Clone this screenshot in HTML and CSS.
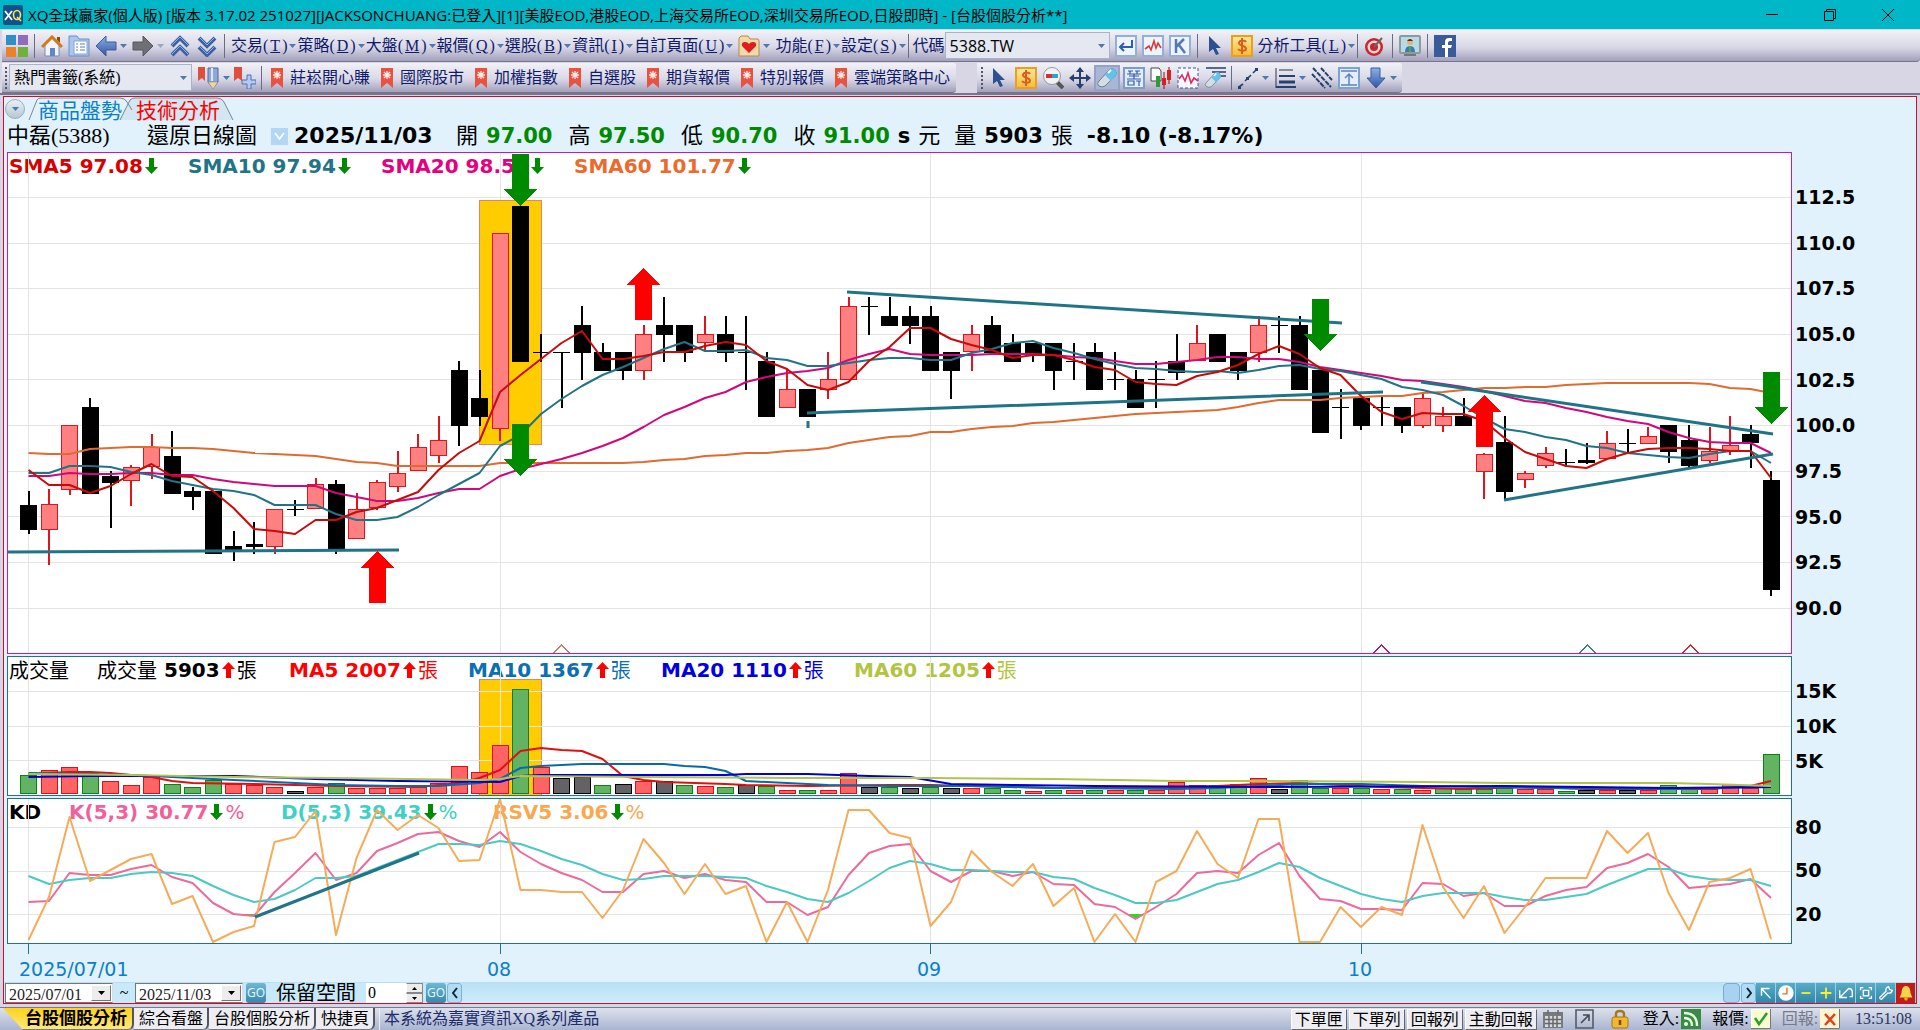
FILE: index.html
```html
<!DOCTYPE html>
<html lang="zh-Hant">
<head>
<meta charset="utf-8">
<title>XQ全球贏家(個人版)</title>
<link rel="stylesheet" href="styles.css">
</head>
<body>
<svg class="defs" aria-hidden="true">
  <defs>
    <linearGradient id="blue" x1="0" y1="0" x2="0" y2="1"><stop offset="0" stop-color="#8fb0e4"/><stop offset="1" stop-color="#2f55a4"/></linearGradient>
    <linearGradient id="gold" x1="0" y1="0" x2="0" y2="1"><stop offset="0" stop-color="#ffe9a0"/><stop offset="1" stop-color="#f7b832"/></linearGradient>
  </defs>
  <symbol id="i-caret" viewBox="0 0 7 4"><path d="M0 0h7L3.500 4z" fill="#4f78ae"/></symbol>
  <symbol id="i-caret-black" viewBox="0 0 7 4"><path d="M0 0h7L3.500 4z" fill="#000"/></symbol>
  <symbol id="i-up" viewBox="0 0 13 16"><path d="M6.500 0L13 7H9v9H4V7H0z" fill="#f00"/></symbol>
  <symbol id="i-down" viewBox="0 0 13 16"><path d="M6.500 16L13 9H9V0H4v9H0z" fill="#008a00"/></symbol>
  <symbol id="i-mark" viewBox="0 0 12 20"><path d="M0 0h12v20l-6-5-6 5z" fill="#e8523f"/><path d="M6 3v8M2 7h8M3 4l6 6M9 4l-6 6" stroke="#ffe9e4" stroke-width="1.300"/></symbol>
  <symbol id="i-cursor" viewBox="0 0 22 22"><path d="M5 1v16l4-3 3 6 3-1-3-6h5z" fill="#2d508f"/></symbol>
  <symbol id="i-dollar" viewBox="0 0 22 22"><rect x="1" y="1" width="20" height="20" fill="url(#gold)" stroke="#e8a020" stroke-width="2"/><path d="M15 7c-1-2-7-2-7 1s7 2.500 7 5.500-6 3-8 .5M11 3v16" fill="none" stroke="#d8601c" stroke-width="2"/></symbol>
  <symbol id="i-eraser" viewBox="0 0 22 22"><path d="M3 14L13 3q3-3 6 0t0 6L9 19q-3 2-6 0t0-5z" fill="#d5dde3" stroke="#6b7f92"/><path d="M9 8l4-5q3-3 6 0t0 6l-4 5z" fill="#63c2ea"/><path d="M12 6l3-3" stroke="#e8fbff" stroke-width="2"/></symbol>
</svg>

<header class="titlebar">
  <svg class="app-logo" viewBox="0 0 20 20"><rect width="20" height="20" rx="2" fill="#12508a"/><path d="M2 6l7 9M9 6l-7 9" stroke="#fff" stroke-width="1.800"/><ellipse cx="14" cy="10" rx="3.500" ry="4.500" fill="none" stroke="#ffe35a" stroke-width="1.600"/><path d="M14 12l4 4" stroke="#ffe35a" stroke-width="1.600"/></svg>
  <h1 class="title">XQ全球贏家(個人版) [版本 3.17.02 251027][JACKSONCHUANG:已登入][1][美股EOD,港股EOD,上海交易所EOD,深圳交易所EOD,日股即時] - [台股個股分析**]</h1>
  <div class="window-buttons">
    <button aria-label="最小化"><svg viewBox="0 0 12 12"><path d="M0 5.500h12" stroke="#000"/></svg></button>
    <button aria-label="還原"><svg viewBox="0 0 12 12"><path d="M.5 2.500h9v9h-9zM2.500 2.500v-2h9v9h-2" fill="none" stroke="#000"/></svg></button>
    <button aria-label="關閉"><svg viewBox="0 0 12 12"><path d="M0 0l12 12M12 0L0 12" stroke="#000"/></svg></button>
  </div>
</header>

<nav class="toolbar main-bar">
  <button class="tool" aria-label="選單"><svg viewBox="0 0 22 22"><path d="M0 0h10v10H0z" fill="#2f8fc8"/><path d="M12 0h10v10H12z" fill="#8f6cc0"/><path d="M0 12h10v10H0z" fill="#f08028"/><path d="M12 12h10v10H12z" fill="#70b238"/></svg></button>
  <i class="sep"></i>
  <button class="tool" aria-label="首頁"><svg viewBox="0 0 22 22"><path d="M4 10v11h14V10l-7-7z" fill="#f2f5fb" stroke="#7089b8"/><path d="M9 13h5v8H9z" fill="#5f86c6"/><path d="M16 2h3v6l-3-3z" fill="#8a4a20"/><path d="M1 12L11 2l10 10" fill="none" stroke="#d07a18" stroke-width="3"/></svg></button>
  <button class="tool" aria-label="頁面清單"><svg viewBox="0 0 22 22"><path d="M1 20V1h8l2 3h10v17H1z" fill="#a9c6ee" stroke="#6d8fc4"/><path d="M6 6h13v13H6z" fill="#fff" stroke="#87a4d0"/><path d="M8 9h2M8 12h2M8 15h2M12 9h5M12 12h5M12 15h5" stroke="#4f7fc2"/></svg></button>
  <button class="tool with-caret" aria-label="上一頁"><svg viewBox="0 0 22 22"><path d="M1 11L11 1v6h10v8H11v6z" fill="url(#blue)" stroke="#3a5c9c"/></svg><svg class="caret"><use href="#i-caret"/></svg></button>
  <button class="tool with-caret" aria-label="下一頁"><svg viewBox="0 0 22 22"><path d="M21 11L11 1v6H1v8h10v6z" fill="#6e7076" stroke="#55575c"/></svg><svg class="caret faded"><use href="#i-caret"/></svg></button>
  <button class="tool" aria-label="向上"><svg viewBox="0 0 22 22"><path d="M3 11l8-8 8 8M3 20l8-8 8 8" fill="none" stroke="#3c61a4" stroke-width="4"/><path d="M3 10l8-8 8 8M3 19l8-8 8 8" fill="none" stroke="#8fb0e4"/></svg></button>
  <button class="tool" aria-label="向下"><svg viewBox="0 0 22 22"><path d="M3 3l8 8 8-8M3 12l8 8 8-8" fill="none" stroke="#3c61a4" stroke-width="4"/><path d="M3 2l8 8 8-8M3 11l8 8 8-8" fill="none" stroke="#8fb0e4"/></svg></button>
  <i class="sep"></i>
  <button class="menu">交易(<u>T</u>)<svg class="caret"><use href="#i-caret"/></svg></button>
  <button class="menu">策略(<u>D</u>)<svg class="caret"><use href="#i-caret"/></svg></button>
  <button class="menu">大盤(<u>M</u>)<svg class="caret"><use href="#i-caret"/></svg></button>
  <button class="menu">報價(<u>Q</u>)<svg class="caret"><use href="#i-caret"/></svg></button>
  <button class="menu">選股(<u>B</u>)<svg class="caret"><use href="#i-caret"/></svg></button>
  <button class="menu">資訊(<u>I</u>)<svg class="caret"><use href="#i-caret"/></svg></button>
  <button class="menu">自訂頁面(<u>U</u>)<svg class="caret"><use href="#i-caret"/></svg></button>
  <button class="tool with-caret favorites" aria-label="我的最愛"><svg viewBox="0 0 22 22"><path d="M1 20V3l2-2h7l2 3h8l1 2v15H1z" fill="#f1d9a8" stroke="#b48a4c"/><path d="M11 18L4 11q-1-4 3-4 3 0 4 2 1-2 4-2 4 0 3 4z" fill="#e01c20"/></svg><svg class="caret"><use href="#i-caret"/></svg></button>
  <button class="menu">功能(<u>F</u>)<svg class="caret"><use href="#i-caret"/></svg></button>
  <button class="menu">設定(<u>S</u>)<svg class="caret"><use href="#i-caret"/></svg></button>
  <i class="sep"></i>
  <label class="code-label" for="code">代碼</label>
  <span class="combo code-combo"><input id="code" value="5388.TW"><svg class="caret"><use href="#i-caret"/></svg></span>
  <button class="tool" aria-label="輸入"><svg viewBox="0 0 22 22"><rect x="1" y="1" width="20" height="20" fill="#eef4fd" stroke="#93aed8" stroke-width="2"/><path d="M17 5v7H6M9 8l-4 4 4 4" fill="none" stroke="#2f5db0" stroke-width="2"/></svg></button>
  <button class="tool" aria-label="走勢圖"><svg viewBox="0 0 22 22"><rect x="1" y="1" width="20" height="20" fill="#eef4fd" stroke="#93aed8" stroke-width="2"/><path d="M3 14l4-3 2 4 3-9 2 7 2-5 3 5" fill="none" stroke="#d83a3a" stroke-width="1.600"/></svg></button>
  <button class="tool" aria-label="K線圖"><svg viewBox="0 0 22 22"><rect x="1" y="1" width="20" height="20" fill="#eef4fd" stroke="#93aed8" stroke-width="2"/><path d="M7 4v14M15 4l-8 8M10 10l6 8" fill="none" stroke="#5478b8" stroke-width="2.500"/></svg></button>
  <i class="sep"></i>
  <button class="tool" aria-label="游標"><svg><use href="#i-cursor"/></svg></button>
  <button class="tool" aria-label="下單"><svg><use href="#i-dollar"/></svg></button>
  <button class="menu">分析工具(<u>L</u>)<svg class="caret"><use href="#i-caret"/></svg></button>
  <i class="sep"></i>
  <button class="tool" aria-label="目標"><svg viewBox="0 0 22 22"><circle cx="10" cy="12" r="9" fill="#c9252b"/><circle cx="10" cy="12" r="6.500" fill="#f3dada"/><circle cx="10" cy="12" r="4" fill="#c9252b"/><path d="M10 12l8-9" stroke="#666" stroke-width="2"/></svg></button>
  <i class="sep"></i>
  <button class="tool" aria-label="客服"><svg viewBox="0 0 22 22"><rect x="1" y="1" width="20" height="17" rx="1" fill="#b6dbe2" stroke="#8d9aa0" stroke-width="2"/><circle cx="11" cy="7" r="3" fill="#e8b078"/><path d="M8 6q3-4 6 0z" fill="#4a3020"/><path d="M6 17q0-6 5-6t5 6z" fill="#3d79b6"/><path d="M10 11h2v6h-2z" fill="#4fa848"/><path d="M5 20h12" stroke="#777" stroke-width="2"/></svg></button>
  <i class="sep"></i>
  <button class="tool" aria-label="Facebook"><svg viewBox="0 0 22 22"><rect width="22" height="22" fill="#3b5a98"/><path d="M18 6h-2q-2 0-2 2v2h4l-1 3h-3v9h-3v-9H8v-3h3V7q0-4 4-4h3z" fill="#fff"/></svg></button>
</nav>

<div class="toolbar-row">
  <nav class="toolbar bookmarks">
    <i class="grip"></i>
    <span class="combo book-combo"><select aria-label="書籤群組"><option>熱門書籤(系統)</option></select><svg class="caret"><use href="#i-caret"/></svg></span>
    <button class="tool with-caret" aria-label="編輯書籤"><svg viewBox="0 0 22 22"><path d="M0 0h7v14l-3-3-4 3z" fill="#e04f3e"/><path d="M10 1h10v14l-5 6-5-6z" fill="#8fa8d8" stroke="#4f689c"/><path d="M10 15h10l-5 7z" fill="#efd7a0" stroke="#777" stroke-width=".5"/><path d="M14 1v13" stroke="#dce6fa" stroke-width="2"/></svg><svg class="caret"><use href="#i-caret"/></svg></button>
    <button class="tool" aria-label="加入書籤"><svg viewBox="0 0 22 22"><path d="M0 0h8v14l-4-3-4 3z" fill="#e04f3e"/><path d="M13 8h4v5h5v4h-5v5h-4v-5H8v-4h5z" fill="#b5c9ee" stroke="#4f73b4"/></svg></button>
    <i class="sep"></i>
    <button class="mark"><svg><use href="#i-mark"/></svg>莊崧開心賺</button>
    <button class="mark"><svg><use href="#i-mark"/></svg>國際股市</button>
    <button class="mark"><svg><use href="#i-mark"/></svg>加權指數</button>
    <button class="mark"><svg><use href="#i-mark"/></svg>自選股</button>
    <button class="mark"><svg><use href="#i-mark"/></svg>期貨報價</button>
    <button class="mark"><svg><use href="#i-mark"/></svg>特別報價</button>
    <button class="mark"><svg><use href="#i-mark"/></svg>雲端策略中心</button>
  </nav>
  <nav class="toolbar drawing">
    <i class="grip"></i>
    <button class="tool" aria-label="游標"><svg><use href="#i-cursor"/></svg></button>
    <button class="tool" aria-label="下單"><svg><use href="#i-dollar"/></svg></button>
    <button class="tool" aria-label="縮小"><svg viewBox="0 0 22 22"><path d="M15 15l6 6" stroke="#555" stroke-width="4"/><circle cx="10" cy="9" r="8.500" fill="#f0f3f6" stroke="#999"/><path d="M4 7h6v4H4z" fill="#d83030"/><path d="M10 7h6v4h-6z" fill="#30a0d0"/></svg></button>
    <button class="tool" aria-label="移動"><svg viewBox="0 0 22 22"><path d="M11 3v16M3 11h16" stroke="#27406e" stroke-width="2"/><path d="M11 0l4 5H7zM11 22l4-5H7zM0 11l5-4v8zM22 11l-5-4v8z" fill="#27406e"/></svg></button>
    <button class="tool pressed" aria-label="橡皮擦"><svg><use href="#i-eraser"/></svg></button>
    <button class="tool" aria-label="籌碼"><svg viewBox="0 0 22 22"><rect x="1" y="1" width="20" height="20" fill="#e4edfb" stroke="#7c9bd0" stroke-width="2"/><path d="M5 4h5M12 4h5M4 7h14M6 9h10M4 12h14M5 14h6v4H5zM13 14h5M16 14v5M7 4v3M14 4v3M11 7v5" fill="none" stroke="#2f5db0" stroke-width="1.200"/></svg></button>
    <button class="tool" aria-label="K線設定"><svg viewBox="0 0 22 22"><path d="M1 1h8l2 3v10H1z" fill="#fff" stroke="#445"/><path d="M6 9h4v11H6z" fill="#2f9a3a"/><path d="M14 5v17M19 0v17" stroke="#a00"/><path d="M12 11h4v7h-4zM17 3h4v10h-4z" fill="#d82020"/></svg></button>
    <button class="tool" aria-label="區間"><svg viewBox="0 0 22 22"><rect x="1" y="1" width="20" height="20" fill="#f6f9ff" stroke="#3556a0" stroke-dasharray="3 2"/><path d="M2 12l3-4 3 6 3-8 3 10 3-5 4 3" fill="none" stroke="#e02a60" stroke-width="1.600"/></svg></button>
    <button class="tool" aria-label="清除畫線"><svg viewBox="0 0 22 22"><path d="M2 1h20M8 5h14M12 9h10" stroke="#27406e" stroke-width="1.500"/><use href="#i-eraser" y="4" width="18" height="18"/></svg></button>
    <i class="sep"></i>
    <button class="tool with-caret" aria-label="畫線"><svg viewBox="0 0 22 22"><path d="M2 20l4-3M8 14l6-6M16 6l4-4" stroke="#27406e" stroke-width="1.600"/><path d="M1 19h3v3H1zM9 10h3v3H9zM18 1h3v3h-3z" fill="#27406e"/></svg><svg class="caret"><use href="#i-caret"/></svg></button>
    <button class="tool with-caret" aria-label="線型"><svg viewBox="0 0 22 22"><path d="M2 1v20M5 3h14" stroke="#334"/><path d="M5 9h16M2 20h20" stroke="#27406e" stroke-width="2"/><path d="M5 15h16" stroke="#27406e" stroke-width="3"/></svg><svg class="caret"><use href="#i-caret"/></svg></button>
    <button class="tool" aria-label="平行線"><svg viewBox="0 0 22 22"><path d="M1 7l13 14M2 1l18 19M10 1l11 12" stroke="#27406e" stroke-width="2" stroke-dasharray="5 1"/></svg></button>
    <button class="tool" aria-label="標記"><svg viewBox="0 0 22 22"><rect x="1" y="1" width="20" height="20" fill="#e4eefb" stroke="#7fa0d2" stroke-width="2"/><path d="M3 4h16M3 18h16M11 18V8M7 11l4-4 4 4" fill="none" stroke="#5b83c4" stroke-width="1.500"/></svg></button>
    <button class="tool with-caret" aria-label="箭頭"><svg viewBox="0 0 22 22"><path d="M6 1h9v10h5l-9 10L2 11h4z" fill="url(#blue)" stroke="#3a5c9c"/></svg><svg class="caret"><use href="#i-caret"/></svg></button>
  </nav>
</div>

<main class="frame">
  <div class="tabs" role="tablist">
    <svg class="tab-lines" viewBox="0 0 240 23"><path d="M116 23L126 3q2-2 5-2h82q5 0 7 4l9 18z" fill="#d3e6f2"/><path d="M25 23L33 3q1-2 4-2h79q5 0 7 4l5 8M116 23L126 3q2-2 5-2h82q5 0 7 4l9 18" fill="none" stroke="#78878f"/></svg>
    <button class="tab-menu" aria-label="分頁選單"><svg class="caret"><use href="#i-caret"/></svg></button>
    <button class="tab" role="tab">商品盤勢</button>
    <button class="tab active" role="tab" aria-selected="true">技術分析</button>
  </div>

  <div class="quote">
    <span>中磊(5388)</span><span>還原日線圖</span>
    <button class="drop" aria-label="週期"><svg viewBox="0 0 17 17"><path d="M4 5l4.500 6L13 5" fill="none" stroke="#fff" stroke-width="1.500"/></svg></button>
    <b class="date">2025/11/03</b>
    <span>開</span><b class="fall">97.00</b><span>高</span><b class="fall">97.50</b><span>低</span><b class="fall">90.70</b>
    <span>收</span><b class="fall tight">91.00</b><b class="tight">s</b><span class="unit">元</span><span>量</span><b class="tight">5903</b><span class="unit">張</span><b class="change">-8.10 (-8.17%)</b>
  </div>

  <div class="charts">
    <section class="panel price">
      <div class="legend price-legend">
        <span class="sma5">SMA5 97.08<svg><use href="#i-down"/></svg></span>
        <span class="sma10">SMA10 97.94<svg><use href="#i-down"/></svg></span>
        <span class="sma20">SMA20 98.50<svg><use href="#i-down"/></svg></span>
        <span class="sma60">SMA60 101.77<svg><use href="#i-down"/></svg></span>
      </div>
      <svg id="price" class="plot" viewBox="8 153 1783 500" preserveAspectRatio="none"></svg>
    </section>
    <div class="scale price-scale"><span>112.5</span><span>110.0</span><span>107.5</span><span>105.0</span><span>102.5</span><span>100.0</span><span>97.5</span><span>95.0</span><span>92.5</span><span>90.0</span></div>

    <section class="panel volume">
      <div class="legend volume-legend">
        <span><em>成交量</em></span>
        <span><em class="lead">成交量</em>5903<svg><use href="#i-up"/></svg><em>張</em></span>
        <span class="ma5">MA5 2007<svg><use href="#i-up"/></svg><em>張</em></span>
        <span class="ma10">MA10 1367<svg><use href="#i-up"/></svg><em>張</em></span>
        <span class="ma20">MA20 1110<svg><use href="#i-up"/></svg><em>張</em></span>
        <span class="ma60">MA60 1205<svg><use href="#i-up"/></svg><em>張</em></span>
      </div>
      <svg id="volume" class="plot" viewBox="8 657 1783 138" preserveAspectRatio="none"></svg>
    </section>
    <div class="scale volume-scale"><span>15K</span><span>10K</span><span>5K</span></div>

    <section class="panel kd">
      <div class="legend kd-legend">
        <span>KD</span>
        <span class="k">K(5,3) 30.77<svg><use href="#i-down"/></svg><small>%</small></span>
        <span class="d">D(5,3) 39.43<svg><use href="#i-down"/></svg><small>%</small></span>
        <span class="rsv">RSV5 3.06<svg><use href="#i-down"/></svg><small>%</small></span>
      </div>
      <svg id="kd" class="plot" viewBox="8 799 1783 144" preserveAspectRatio="none"></svg>
    </section>
    <div class="scale kd-scale"><span>80</span><span>50</span><span>20</span></div>

    <div class="months">
      <svg class="plot" viewBox="7 944 1785 38" preserveAspectRatio="none"><path d="M28.500 944v10M500.500 944v10M930.500 944v10M1361.500 944v10" stroke="#1f7488"/></svg>
      <span>2025/07/01</span><span>08</span><span>09</span><span>10</span>
    </div>
  </div>

  <div class="range">
    <span class="date-box"><input aria-label="開始日期" value="2025/07/01"><button aria-label="選擇開始日期"><svg class="caret"><use href="#i-caret-black"/></svg></button></span>
    <span class="tilde">~</span>
    <span class="date-box"><input aria-label="結束日期" value="2025/11/03"><button aria-label="選擇結束日期"><svg class="caret"><use href="#i-caret-black"/></svg></button></span>
    <button class="go">GO</button>
    <label for="space">保留空間</label>
    <span class="spin-box"><input id="space" value="0"><span class="spin"><button aria-label="增加"><svg viewBox="0 0 5 3"><path d="M0 3h5L2.500 0z"/></svg></button><button aria-label="減少"><svg viewBox="0 0 5 3"><path d="M0 0h5L2.500 3z"/></svg></button></span></span>
    <button class="go">GO</button>
    <button class="page" aria-label="往前"><svg viewBox="0 0 6 12"><path d="M5 1L1 6l4 5" fill="none" stroke="#123" stroke-width="2"/></svg></button>
    <span class="track"></span>
    <button class="thumb" aria-label="捲動"></button>
    <button class="page" aria-label="往後"><svg viewBox="0 0 6 12"><path d="M1 1l4 5-4 5" fill="none" stroke="#123" stroke-width="2"/></svg></button>
    <button class="mini" aria-label="指標"><svg viewBox="0 0 20 20"><path d="M5 13V5h9M5 5l10 11" fill="none" stroke="#fff" stroke-width="1.500"/></svg></button>
    <button class="mini" aria-label="時間"><svg viewBox="0 0 20 20"><circle cx="10" cy="10" r="8.500" fill="#fff"/><path d="M11 4v7H6" fill="none" stroke="#e07020" stroke-width="1.500"/></svg></button>
    <button class="mini" aria-label="縮小"><svg viewBox="0 0 20 20"><path d="M5 10h10" stroke="#ffee20" stroke-width="2"/></svg></button>
    <button class="mini" aria-label="放大"><svg viewBox="0 0 20 20"><path d="M4 10h12M10 4v12" stroke="#ffee20" stroke-width="2"/></svg></button>
    <button class="mini" aria-label="還原"><svg viewBox="0 0 20 20"><path d="M3 7v8h8M3 15L13 5q4 0 4 4v5h-3" fill="none" stroke="#fff" stroke-width="1.500"/></svg></button>
    <button class="mini" aria-label="全螢幕"><svg viewBox="0 0 20 20"><path d="M4 7V4h3M13 4h3v3M16 13v3h-3M7 16H4v-3M7 7h6v6H7z" fill="none" stroke="#fff" stroke-width="1.500"/></svg></button>
    <button class="mini" aria-label="設定"><svg viewBox="0 0 20 20"><path d="M3 15l7-7q-1-4 3-5l1 3 3 1q-1 4-5 3l-7 7q-2 0-2-2z" fill="none" stroke="#fff" stroke-width="1.400"/></svg></button>
    <button class="mini alert" aria-label="警示"><svg viewBox="0 0 20 20"><path d="M10 2q5 1 5 8l2 5H3l2-5q0-7 5-8z" fill="#f7d34c"/><circle cx="10" cy="16.500" r="2" fill="#e8a820"/></svg></button>
  </div>
</main>

<footer class="status">
  <button class="sheet current">台股個股分析</button>
  <button class="sheet">綜合看盤</button>
  <button class="sheet">台股個股分析</button>
  <button class="sheet">快捷頁</button>
  <p class="notice">本系統為嘉實資訊XQ系列產品</p>
  <button class="order">下單匣</button>
  <button class="order">下單列</button>
  <button class="order">回報列</button>
  <button class="order">主動回報</button>
  <svg class="calc" viewBox="0 0 20 20"><path d="M0 3h20v16H0z" fill="#77797d"/><path d="M2 7h16v11H2z" fill="#d8dade"/><path d="M6 7v11M10 7v11M14 7v11M2 10.500h16M2 14.500h16M5 1v4M15 1v4" stroke="#66686c" stroke-width="1.500"/></svg>
  <svg class="popout" viewBox="0 0 20 20"><path d="M1 1h17v18H1z" fill="none" stroke="#555b66" stroke-width="1.600"/><path d="M6 14l8-8M8 6h6v6" fill="none" stroke="#444a55" stroke-width="1.600"/></svg>
  <svg class="lock" viewBox="0 0 18 20"><path d="M5 9V5q0-3 4-3t4 3v4" fill="none" stroke="#a87818" stroke-width="2.400"/><rect x="1" y="8" width="16" height="11" rx="2" fill="#f2b92c" stroke="#a87818"/><path d="M9 11v5" stroke="#7a4a00" stroke-width="2.500"/></svg>
  <span class="state">登入:</span>
  <svg class="lamp" viewBox="0 0 20 20"><path d="M0 0h20v20H0z" fill="#3a8a44"/><path d="M3 9q8 0 8 8M3 4q13 0 13 13" fill="none" stroke="#e4ffe0" stroke-width="2.400"/><circle cx="5" cy="15" r="2" fill="#e4ffe0"/></svg>
  <span class="state">報價:</span>
  <svg class="lamp" viewBox="0 0 20 20"><path d="M0 0h20v20H0z" fill="#fbfbd0"/><path d="M.5 19.500V.5h19" stroke="#fff" fill="none"/><path d="M0 19.500h19.500V0" fill="none" stroke="#777"/><path d="M4 9l4 6 8-11" fill="none" stroke="#28a030" stroke-width="2.500"/></svg>
  <span class="state off">回報:</span>
  <svg class="lamp" viewBox="0 0 20 20"><path d="M0 0h20v20H0z" fill="#fdf6d0"/><path d="M0 19.500h19.500V0" fill="none" stroke="#777"/><path d="M5 5l10 11M15 5L5 16" stroke="#e0401c" stroke-width="2.500"/></svg>
  <time class="clock">13:51:08</time>
</footer>
<script src="charts.js"></script>
</body>
</html>
```
FILE: styles.css
```css
* { box-sizing: border-box; }

body {
  margin: 0;
  min-height: 100vh;
  display: flex;
  flex-direction: column;
  background: #d8d6e4;
  color: #000;
  font: 16px/20px "Liberation Serif", "Noto Sans CJK TC", serif;
  overflow-x: hidden;
}

button, input, select { font: inherit; color: inherit; border: 0; padding: 0; margin: 0; background: none; border-radius: 0; }
input:focus, select:focus { outline: none; }
svg { display: block; flex: none; }
.defs { position: absolute; width: 0; height: 0; }
.caret { width: 7px; height: 4px; }
.faded { opacity: .5; }

/* title bar */
.titlebar { height: 29px; display: flex; align-items: center; background: #00b7c7; padding: 0 3px; }
.app-logo { width: 20px; height: 22px; }
.title { flex: 1; margin: 0 0 0 5px; font: 15px/20px "Open Sans", "Noto Sans CJK TC", sans-serif; white-space: nowrap; overflow: hidden; }
.window-buttons { display: flex; }
.window-buttons button { width: 58px; height: 28px; display: grid; place-items: center; }
.window-buttons svg { width: 12px; height: 12px; }

/* toolbars */
.toolbar {
  display: flex;
  align-items: center;
  color: #101a6a;
  background: linear-gradient(#f1f1f7, #d9d8e6 55%, #a3a0bc);
  border-bottom: 1px solid #77758c;
  white-space: nowrap;
}
.main-bar { height: 32px; margin-top: 1px; margin-left: 2px; padding-left: 4px; gap: 5px; border-radius: 0 0 4px 0; flex: none; overflow: hidden; }
.toolbar-row { display: flex; gap: 21px; padding-left: 2px; border-bottom: 2px solid #77758c; height: 33px; flex: none; overflow: hidden; }
.toolbar-row .toolbar { height: 30px; margin-top: 1px; border-radius: 0 2px 4px 0; }
.sep { width: 1px; height: 24px; background: #6d6b84; margin: 0 1px; flex: none; }
.grip { width: 2px; height: 22px; flex: none; background: repeating-linear-gradient(#55536c 0 2px, transparent 2px 4px); }
.tool { display: flex; align-items: center; flex: none; }
.tool svg:not(.caret) { width: 22px; height: 22px; }
.with-caret { gap: 3px; }
.pressed { background: #a9b6d4; outline: 2px solid #93a2c6; }
.menu { display: flex; align-items: center; gap: 2px; flex: none; height: 24px; margin-right: -4px; }
.favorites { margin-left: 4px; }
.code-label { margin: 0 -5px 0 -2px; }
.combo { position: relative; display: block; color: #000; flex: none; }
.combo .caret { position: absolute; right: 5px; top: 12px; }
.combo input, .combo select { width: 100%; height: 100%; background: #e5e8f0; border: 1px solid #a9b4c4; padding: 0 4px; appearance: none; }
.code-combo { width: 165px; height: 27px; font-family: "Open Sans", sans-serif; }
.book-combo { width: 183px; height: 27px; margin-right: 4px; }
.bookmarks { padding: 0 6px 0 3px; gap: 2px; }
.bookmarks .tool { margin-right: 2px; }
.mark { display: flex; align-items: center; gap: 7px; margin-left: 9px; }
.sep + .mark { margin-left: 6px; }
.mark svg { width: 12px; height: 22px; }
.drawing { padding: 0 5px 0 4px; gap: 5px; }
.drawing .sep { margin: 0; }

/* chart frame */
.frame { flex: 1; display: flex; flex-direction: column; margin: 1px 3px 0; border: 1px solid #c8102e; background: #e1f2fc; }
.tabs { position: relative; height: 23px; display: flex; align-items: center; flex: none; }
.tab-lines { position: absolute; left: 0; top: 0; width: 240px; height: 23px; }
.tab-menu { position: relative; width: 20px; height: 20px; margin: 0 13px 0 1px; border-radius: 50%; background: linear-gradient(#e8f1f5, #b5c8d2); border: 1px solid #9ab0ba; display: grid; place-items: center; }
.tab { position: relative; width: 98px; text-align: left; font: 21px/22px "Noto Sans CJK TC", sans-serif; color: #0a80c8; }
.tab.active { color: #f00; }
.quote { height: 32px; display: flex; align-items: center; flex: none; padding-left: 3px; gap: 8px; font: 22px/30px "Liberation Serif", "Noto Sans CJK TC", serif; white-space: nowrap; }
.quote b { font: bold 21px/30px "DejaVu Sans", sans-serif; margin-right: 8px; }
.quote b.fall { color: #008a00; }
.quote b.tight { margin-right: 0; }
.quote .unit { margin-right: 6px; }
.quote b.date, .quote b.change { font-size: 22px; }
.quote b.date { width: 146px; }
.quote span:first-child { width: 132px; }
.drop { width: 17px; height: 17px; background: #b3d6f2; margin: 0 -2px 0 6px; }

.charts { flex: 1; display: grid; grid-template-columns: 1fr 124px; grid-template-rows: 502fr 140fr 146fr 36fr; row-gap: 2px; padding-left: 3px; min-height: 600px; }
.panel { position: relative; background: #fff; border: 1px solid #1f7488; min-width: 0; }
.price { border-color: #c218c2; }
.plot { position: absolute; left: 0; top: 0; width: 100%; height: 100%; shape-rendering: crispEdges; }
.plot .series { shape-rendering: geometricPrecision; stroke-linejoin: round; }
.legend { position: absolute; left: 1px; top: 3px; display: grid; font: bold 20px/20px "DejaVu Sans", sans-serif; white-space: nowrap; }
.legend span { display: flex; align-items: center; gap: 2px; }
.legend svg { width: 13px; height: 16px; }
.legend em { font: 20px/20px "Noto Sans CJK TC", sans-serif; }
.legend small { font-size: 20px; font-weight: normal; }
.price-legend { grid-template-columns: 179px 193px 193px auto; }
.volume-legend { grid-template-columns: 88px 192px 179px 193px 193px auto; }
.kd-legend { grid-template-columns: 60px 212px 212px auto; }
.legend .lead { margin-right: 5px; }
.sma5 { color: #d80000; }
.sma10 { color: #1f7488; }
.sma20 { color: #e4007f; }
.sma60 { color: #ec6a2c; }
.ma5 { color: #f00; }
.ma10 { color: #0a6fb4; }
.ma20 { color: #0000e0; }
.ma60 { color: #b2c440; }
.k { color: #f2609a; }
.d { color: #3fd0c8; }
.rsv { color: #f8a850; }

.scale { display: grid; grid-auto-rows: 1fr; align-items: center; padding-left: 3px; font: bold 19px/20px "DejaVu Sans", sans-serif; }
.price-scale { padding-top: 22px; padding-bottom: 23px; }
.volume-scale { padding-top: 18px; padding-bottom: 18px; }
.kd-scale { padding-top: 7px; padding-bottom: 8px; }
.months { position: relative; margin-top: -2px; display: grid; grid-template-columns: 468fr 430fr 431fr 444fr; padding-left: 12px; padding-top: 14px; font: 19px/22px "DejaVu Sans", sans-serif; color: #0a80c8; }

/* range bar under the charts */
.range { height: 21px; display: flex; align-items: stretch; background: #c8e9fa; flex: none; white-space: nowrap; padding-left: 1px; border-top: 1px solid #b5e0f5; }
.range svg { margin: auto; }
.date-box, .spin-box { display: flex; background: #fff; }
.date-box { width: 108px; border: 1px solid #777; border-right-color: #ddd; padding-right: 1px; color: #222; overflow: hidden; }
.date-box input { flex: 1; min-width: 0; height: 22px; padding-left: 3px; }
.date-box button { width: 20px; margin: 1px 0; background: #ececec; border: 1px solid #fff; border-right-color: #777; border-bottom-color: #777; }
.tilde { width: 22px; text-align: center; }
.go { width: 20px; margin-left: 3px; border-radius: 3px; background: linear-gradient(#6fb8d4, #3488ae); color: #eaf8ff; font: 12px/18px "Open Sans", sans-serif; }
.range label { margin: 0 10px 0 10px; font: 20px/18px "Noto Sans CJK TC", sans-serif; }
.spin-box { width: 57px; }
.spin-box input { flex: 1; min-width: 0; padding-left: 2px; }
.spin { display: flex; flex-direction: column; }
.spin button { width: 17px; flex: 1; display: flex; background: #ececec; border: 1px solid #888; border-left-color: #fff; }
.spin svg { width: 5px; height: 3px; }
.page { width: 15px; margin-left: 1px; border-radius: 3px; background: #b0dcf4; border: 1px solid #7fb0d8; display: flex; }
.page svg { width: 6px; height: 12px; }
.track { flex: 1; background: linear-gradient(#b9e1f6, #cdecfb); }
.thumb { width: 17px; border: 1px solid #7fa8d0; border-radius: 4px; background: #a8d2f2; }
.mini { width: 20px; display: flex; border-right: 1px solid #9cd0e4; background: linear-gradient(#58acc8, #2f86aa); }
.mini svg { width: 18px; height: 18px; }
.mini.alert { background: #c01c1c; }

/* status bar */
.status { height: 23px; flex: none; margin-top: 3px; display: flex; align-items: stretch; border-top: 1px solid #6f7f90; background: linear-gradient(#dde1ec, #a9b4d0); white-space: nowrap; padding-right: 8px; line-height: 21px; }
.sheet { padding: 0 4px 0 5px; background: #eeeef2; border-right: 2px solid #55535c; border-bottom: 1px solid #77758c; border-radius: 0 0 6px 0; line-height: 20px; }
.sheet.current { margin-left: 3px; padding: 0 5px 0 22px; font-weight: bold; font-size: 17px; background: linear-gradient(#ffd21c, #ffe87a); clip-path: polygon(0 0, 100% 0, 100% 100%, 20px 100%); }
.notice { flex: 1; margin: 0 0 0 4px; padding-left: 4px; color: #1c2c6c; border-left: 1px solid #eee; }
.order { margin: 1px 2px 0 0; padding: 0 3px; background: #eeedf2; border: 1px solid #fff; border-right-color: #66656e; border-bottom-color: #66656e; line-height: 18px; }
.status svg { height: 20px; align-self: center; }
.calc { width: 20px; margin-left: 4px; }
.popout { width: 20px; margin-left: 12px; }
.lock { width: 18px; margin: 0 14px 0 16px; }
.lamp { width: 20px; margin: 0 11px 0 2px; }
.off { color: #77798a; }
.clock { margin-left: 4px; color: #2a3560; }
```
FILE: charts.js
```js
const NS = "http://www.w3.org/2000/svg";
const STEP = 20.5;
const x = day => 28.5 + day * STEP;

function add(svg, name, attrs) {
  const node = document.createElementNS(NS, name);
  for (const key in attrs) node.setAttribute(key, attrs[key]);
  svg.appendChild(node);
}
const nums = text => text.trim().split(/\s+/).map(Number);
const stroke = (svg, d, color, width, group = "") => add(svg, "path", { d, fill: "none", stroke: color, "stroke-width": width, class: group });
const daily = text => nums(text).map((y, i) => [i, y]);
const pairs = text => text.trim().split(/\s+/).map(p => p.split(",").map(Number));
const line = (svg, points, color, width) =>
  stroke(svg, "M" + points.map(([i, y]) => x(i) + " " + y).join("L"), color, width, "series");
function grid(svg, levels, top, bottom) {
  levels.forEach(y => stroke(svg, `M8 ${y}H1791`, "#e4e4e2", 1));
  [28.5, 500.5, 930.5, 1361.5].forEach(v => stroke(svg, `M${v} ${top}V${bottom}`, "#e4e4e0", 1));
}

/* price: kind, high, body top, body bottom, low */
const candles = `K 491 505 530 534|R 489 504 530 565|R 425 425 490 495|K 398 407 494 494|K 471 476 483 528|R 465 467 481 506|R 434 447 467 479|K 431 456 494 494|K 487 491 497 510|K 491 491 554 554|K 531 546 551 561|K 522 544 547 554|R 509 509 547 554|K 500 509 510 516|R 478 484 509 509|K 480 484 551 554|R 493 509 539 539|R 480 482 508 510|R 451 473 487 492|R 434 447 471 471|R 416 440 456 463|K 361 370 426 446|K 370 398 417 426|R 233 233 429 441|K 206 206 362 362|K 334 352 353 362|K 352 352 353 408|K 306 325 353 380|K 343 352 371 371|K 352 352 371 380|R 325 334 371 380|K 297 325 335 362|K 325 325 353 362|R 316 334 343 352|K 316 334 353 362|K 316 352 353 390|K 352 361 417 417|R 370 389 408 408|K 389 389 417 417|R 352 379 390 399|R 297 306 380 380|K 297 306 307 335|K 297 316 326 326|K 306 316 326 344|K 306 316 371 371|K 352 352 371 399|R 325 334 352 371|K 316 325 353 353|K 334 343 362 362|K 343 343 354 362|K 343 343 371 390|K 343 361 362 380|K 343 352 390 390|K 352 379 380 390|K 370 379 408 408|K 361 379 380 408|K 334 361 373 380|R 325 343 361 361|K 334 334 362 362|K 352 352 371 380|R 316 325 353 362|K 316 325 326 353|K 316 325 390 390|K 370 370 433 433|K 389 407 408 439|K 398 398 426 430|K 397 407 408 426|K 407 407 426 433|R 392 398 426 428|R 407 416 426 432|K 398 416 426 426|R 453 454 472 499|K 416 442 492 500|R 471 473 480 488|R 447 453 466 468|K 449 462 463 467|K 443 460 463 464|R 431 443 459 459|K 429 443 444 453|R 427 436 444 444|K 425 425 452 463|K 425 440 466 468|R 427 451 461 463|R 416 445 451 455|K 425 434 443 468|K 471 480 590 596`
  .split("|").map(row => row.split(" ").map((v, i) => i ? +v : v));

const price = document.getElementById("price");
grid(price, [197.5, 243.5, 288.5, 334.5, 379.5, 425.5, 471.5, 516.5, 562.5, 608.5], 153, 653);
add(price, "rect", { x: 479.5, y: 200.5, width: 62, height: 244, fill: "#fc0", stroke: "#d88870" });
candles.forEach(([kind, high, top, bottom, low], i) => {
  const red = kind === "R";
  const color = red ? "#e0141c" : "#000";
  stroke(price, `M${x(i)} ${high}V${top}M${x(i)} ${bottom}V${low}`, color, 2);
  if (red) add(price, "rect", { x: x(i) - 8, y: top + 0.5, width: 16, height: Math.max(bottom - top - 1, 1), fill: "#ff8080", stroke: color });
  else add(price, "rect", { x: x(i) - 8.5, y: top, width: 17, height: bottom - top, fill: color });
});
line(price, daily(`453 454 454 449 448 447 447 448 448 449 451 453 454 455 456 459 462 463 466 466 466 466 466 463 463 463 463 463 463 463 462 460 459 456 455 453 453 451 450 448 443 440 437 436 432 432 429 427 426 423 422 420 418 416 414 413 412 411 410 407 403 400 400 400 398 397 396 396 393 392 390 388 388 387 387 385 384 383 383 383 383 383 384 388 389 393`), "#e06a30", 2);
line(price, daily(`476 476 473 474 474 473 473 475 475 479 482 484 486 486 486 493 497 501 501 498 493 489 489 476 469 464 459 453 446 438 427 415 407 398 392 382 377 373 371 368 360 354 349 354 355 355 355 354 354 354 355 357 358 361 364 364 362 360 357 357 359 359 362 367 370 373 376 380 381 384 387 391 396 401 403 408 412 417 421 424 432 438 442 443 443 453`), "#d0087c", 2);
line(price, daily(`473 473 466 466 467 472 475 481 485 489 491 495 505 505 505 514 520 520 517 507 495 484 473 446 435 414 399 386 375 367 358 349 342 351 351 350 358 360 366 366 363 360 358 358 360 360 353 349 343 341 348 353 359 364 368 369 371 372 371 373 370 366 365 369 371 375 379 387 390 395 406 418 429 432 437 440 446 448 453 455 457 458 454 451 451 463`), "#1f7488", 2);
line(price, daily(`470 485 485 493 486 474 464 476 477 491 508 529 531 534 520 520 512 508 500 492 470 453 441 392 375 359 343 331 359 359 356 352 352 346 342 345 361 369 385 390 382 361 347 328 328 339 345 350 358 355 355 360 367 370 382 384 385 376 372 365 354 346 354 368 375 396 412 419 413 414 414 421 438 452 459 466 468 459 453 449 448 448 449 451 451 478`), "#c80a0a", 2);
stroke(price, "M8 552L399 550M847 292L1342 323M807 413L1383 392M1421 382L1773 434M1504 500L1773 454M808 421V428", "#1f7488", 3, "series");
const down = (cx, tip, top = tip - 52) => add(price, "path", { d: `M${cx} ${tip}l17-17h-8.500V${top}h-17V${tip - 17}h-8.500z`, fill: "#008a00" });
const up = (cx, tip) => add(price, "path", { d: `M${cx} ${tip}l17 17h-8.500v35h-17v-35h-8.500z`, fill: "#f00" });
down(520.5, 206); down(520.5, 476); down(1320.5, 351); down(1771.5, 424);
up(377.5, 551); up(643.5, 268); up(1484.5, 395);
[[561.5, "#c08060"], [1381.5, "#a02080"], [1587.5, "#408080"], [1690.5, "#c03030"]]
  .forEach(([cx, color]) => stroke(price, `M${cx - 8} 653l8-8 8 8`, color, 1));

/* volume: colour and bar top, all bars stand on 794 */
const bars = `G775 R770 R767 G773 R781 R785 R777 G784 G787 G780 R784 R785 R787 K791 R787 G783 R788 R788 R788 R787 R783 R766 R772 R745 G689 R767 K778 K777 G785 K784 R781 K781 G785 R786 G787 K785 G786 R790 G790 R790 R773 K787 G787 K788 G787 K788 R788 G788 G790 R791 G790 R790 G790 R790 G790 R790 R782 R785 G785 G784 R778 K789 G780 G788 R788 G788 R789 G789 R790 G788 G789 G789 G788 R789 R789 G791 K790 R790 K790 R790 G785 G789 R789 R784 R788 G754`
  .split(" ").map(v => [v[0], +v.slice(1)]);
const barColors = { R: ["#ff6464", "#d81018"], G: ["#62b462", "#108010"], K: ["#646266", "#000"] };
const volume = document.getElementById("volume");
add(volume, "rect", { x: 479.5, y: 679.5, width: 62, height: 116, fill: "#fc0", stroke: "#d88870" });
grid(volume, [691.5, 726.5, 760.5], 657, 795);
bars.forEach(([kind, top], i) => add(volume, "rect", { x: x(i) - 8, y: top + 0.5, width: 16, height: 793 - top, fill: barColors[kind][0], stroke: barColors[kind][1] }));
line(volume, pairs(`0,774 1,773 2,772 3,772 4,773 5,775 6,777 7,781 8,783 11,784 13,785 15,786 19,787 20,785 21,783 22,778 23,770 24,751 25,748 26,750 27,751 28,759 29,776 30,780 31,782 34,784 35,785 38,786 42,785 44,785 48,787 50,788 54,788 58,786 60,784 62,783 64,785 66,787 70,789 73,787 76,789 82,789 84,786 85,781`), "#e01010", 2);
line(volume, pairs(`0,773 5,775 8,778 10,780 12,782 15,785 18,786 20,786 22,783 23,779 24,768 25,766 27,764 31,764 32,766 33,767 34,771 35,781 37,783 39,785 42,786 46,786 50,788 56,789 58,788 60,786 62,784 65,784 68,786 74,788 80,789 85,787`), "#0a6aa8", 2);
line(volume, pairs(`0,777 3,776 10,776 14,779 18,781 23,782 24,776 25,775 34,775 35,774 38,774 41,776 43,777 45,784 48,785 52,786 60,787 72,786 80,788 85,787`), "#0000d0", 2);
line(volume, pairs(`0,774 5,775 10,777 15,778 22,780 23,779 24,776 30,777 37,778 44,778 50,779 56,781 60,781 68,782 72,783 80,783 82,784 85,786`), "#b2c450", 2);

const kd = document.getElementById("kd");
grid(kd, [827.5, 871.5, 914.5], 799, 943);
add(kd, "path", { d: "M242 914h15l-2 3zM1126 914h18l-9 5z", fill: "#20e020" });
line(kd, daily(`902 901 873 875 875 869 865 877 883 903 914 916 892 873 853 880 873 851 843 834 832 841 847 832 852 864 873 880 892 892 874 871 878 874 880 882 902 902 915 907 875 853 846 844 871 882 871 871 876 872 884 885 904 907 919 907 894 873 871 873 855 843 876 899 901 909 909 910 883 884 896 893 906 906 896 890 887 868 863 854 867 888 886 884 879 898`), "#ec6a9c", 2);
line(kd, daily(`876 884 880 878 878 874 872 873 876 886 895 902 899 890 878 878 876 868 860 852 844 844 845 841 844 851 859 865 874 880 879 876 876 876 877 878 886 892 899 902 893 881 868 861 864 870 870 871 872 872 877 879 888 895 903 903 900 892 884 880 872 863 867 878 886 894 899 902 896 893 893 893 897 900 900 897 894 885 877 869 869 876 879 880 880 886`), "#4cc9c4", 2);
line(kd, daily(`940 897 817 881 870 859 854 904 896 942 932 926 842 837 811 935 858 810 830 815 828 861 860 799 890 890 892 892 918 890 839 863 894 864 894 886 942 902 942 890 810 810 833 838 926 902 851 872 886 864 906 888 942 914 942 882 871 831 864 878 819 819 942 942 907 927 907 915 825 887 918 886 933 907 878 878 878 831 853 833 893 930 882 878 869 939`), "#f5ac5a", 2);
stroke(kd, "M255 917L419 853", "#1f7488", 3, "series");
```
